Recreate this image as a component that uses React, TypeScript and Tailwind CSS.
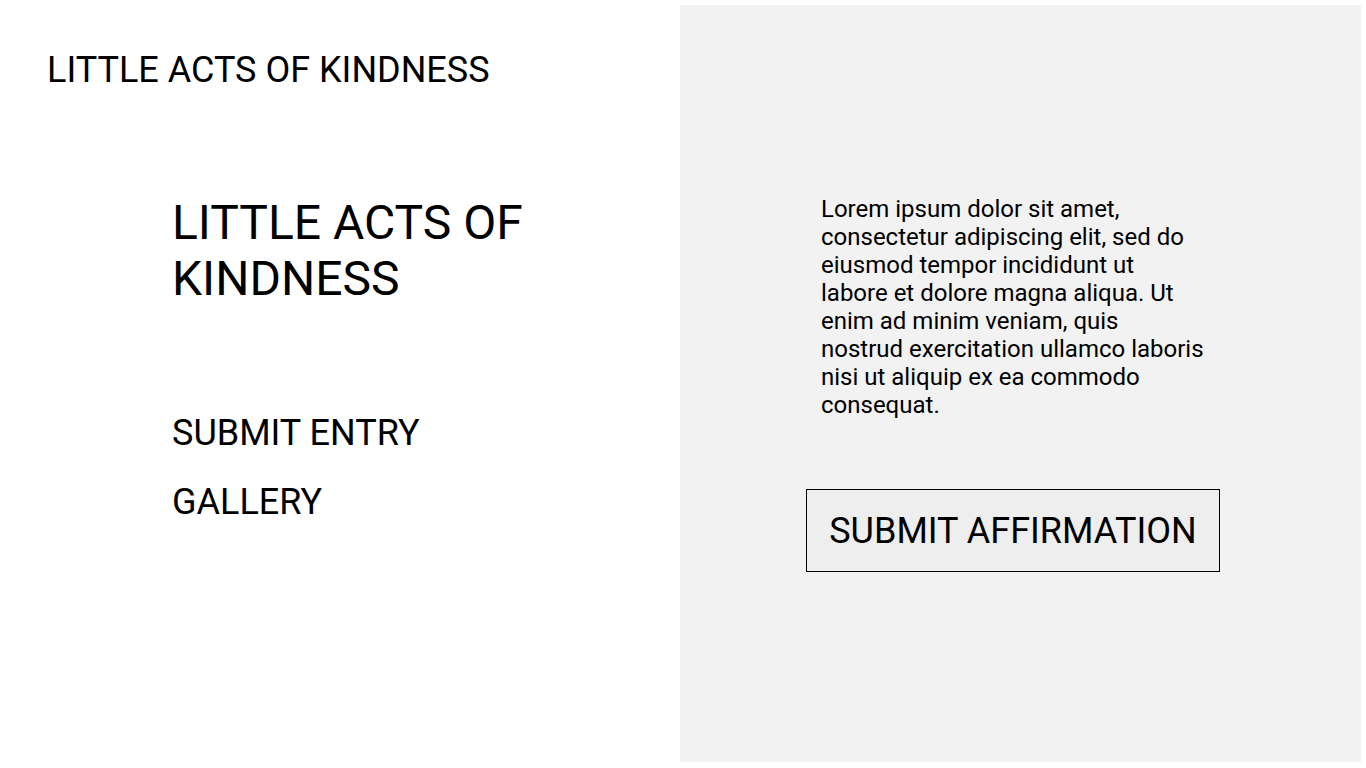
const body =
  "Lorem ipsum dolor sit amet, consectetur adipiscing elit, sed do eiusmod tempor incididunt ut labore et dolore magna aliqua. Ut enim ad minim veniam, quis nostrud exercitation ullamco laboris nisi ut aliquip ex ea commodo consequat.";

export default function App() {
  return (
    <div className="flex h-[768px] w-[1366px] bg-white font-['Roboto',sans-serif] text-black">
      {/* left column */}
      <div className="flex w-[680px] flex-col">
        <h1 className="pl-[47px] pt-[48px] text-[36px] leading-[44px]">LITTLE ACTS OF KINDNESS</h1>
        <div className="pl-[172px] pt-[103px]">
          <h2 className="w-[400px] text-[48px] leading-[56px]">LITTLE ACTS OF KINDNESS</h2>
          <nav className="mt-[104px] flex flex-col gap-[25px] text-[36px] leading-[44px]">
            <a>SUBMIT ENTRY</a>
            <a>GALLERY</a>
          </nav>
        </div>
      </div>

      {/* right panel */}
      <div className="mb-[6px] mr-[5px] mt-[5px] flex flex-1 flex-col bg-[#f2f2f2]">
        <p className="ml-[141px] mt-[190px] w-[383px] text-[24px] leading-[28px]">{body}</p>
        <button className="ml-[126px] mt-[70px] h-[83px] w-[414px] border border-black bg-[#eeeeee] text-[36px]">
          SUBMIT AFFIRMATION
        </button>
      </div>
    </div>
  );
}
